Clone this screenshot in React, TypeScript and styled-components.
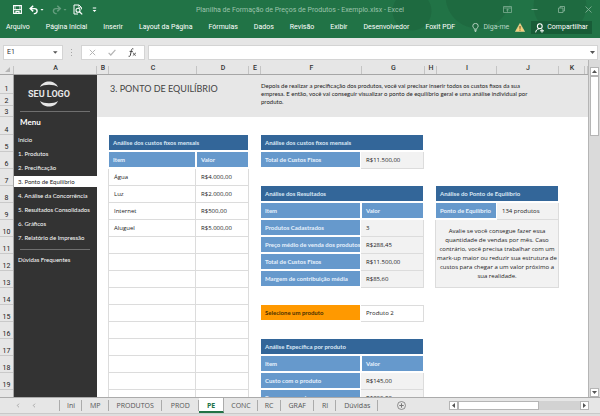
import React from "react";
import styled, { createGlobalStyle, css } from "styled-components";

const GlobalStyle = createGlobalStyle`
  *, *::before, *::after { box-sizing: border-box; }
  html, body { margin: 0; padding: 0; }
  body { background: #e6e6e6; overflow: hidden; }
  button, input, select { font: inherit; color: inherit; margin: 0; padding: 0; border: 0; background: none; }
`;

const uiFont = css`font-family: Roboto, "Open Sans", sans-serif;`;
const cellFont = css`font-family: Lato, "Open Sans", sans-serif;`;
const valueFont = css`font-family: "Open Sans", Lato, sans-serif;`;

const Shell = styled.div`
  ${uiFont}
  display: flex;
  flex-direction: column;
  height: 100vh;
  font-size: 7px;
  line-height: 9px;
  color: #333;
  background: #e6e6e6;
`;

/* ---------- title bar and ribbon ---------- */

const Top = styled.header`
  flex: none;
  background:
    radial-gradient(circle at 412px 11px, #1e6a40 0 19px, transparent 20px),
    radial-gradient(circle at 478px -4px, #1e6a40 0 32px, transparent 33px),
    radial-gradient(circle at 560px 6px, #1e6a40 0 26px, transparent 27px),
    #217346;
  color: #fff;
`;

const TitleBar = styled.div`
  display: grid;
  grid-template-columns: 1fr auto 1fr;
  align-items: center;
  height: 19px;
`;

const QuickAccess = styled.div`
  display: flex;
  align-items: center;
  gap: 4px;
  padding-left: 12px;
`;

const IconButton = styled.button<{ $w?: number; $dim?: boolean }>`
  display: flex;
  align-items: center;
  justify-content: center;
  flex: none;
  width: ${(p) => p.$w ?? 11}px;
  height: 12px;
  opacity: ${(p) => (p.$dim ? 0.3 : 1)};
`;

const DocTitle = styled.h1`
  margin: 0;
  padding-top: 2px;
  font-size: 7px;
  font-weight: 400;
  color: #9cc3ac;
  white-space: nowrap;
`;

const WindowButtons = styled.div`
  display: flex;
  justify-content: flex-end;
  gap: 16px;
  padding-right: 6px;
  color: #7fae93;
`;

const Ribbon = styled.nav`
  display: flex;
  align-items: center;
  gap: 16px;
  height: 19px;
  padding: 0 8px 2px 6px;
  white-space: nowrap;
`;

const RibbonTab = styled.button`
  flex: none;
  white-space: nowrap;
`;

const RibbonEnd = styled.div`
  display: flex;
  align-items: center;
  gap: 6px;
  margin-left: auto;
`;

const TellMe = styled.button`
  display: flex;
  align-items: center;
  gap: 4px;
  color: #b9d6c5;
`;

const Share = styled.button`
  display: flex;
  align-items: center;
  gap: 3px;
  height: 13px;
  padding: 0 4px;
  background: #185c37;
`;

/* ---------- formula bar ---------- */

const FormulaBar = styled.div`
  display: flex;
  flex: none;
  height: 22px;
  padding: 7px 2px 0 3px;
`;

const NameBox = styled.label`
  display: flex;
  align-items: center;
  width: 60px;
  height: 15px;
  padding: 0 4px 0 3px;
  border: 1px solid #d4d4d4;
  background: #fff;
  input { width: 100%; min-width: 0; outline: 0; }
`;

const Grip = styled.span`
  display: flex;
  justify-content: center;
  width: 18px;
  height: 15px;
  color: #a6a6a6;
`;

const FormulaTools = styled.div`
  display: flex;
  align-items: center;
  gap: 10px;
  width: 64px;
  height: 15px;
  padding: 0 6px;
  border: 1px solid #d4d4d4;
  background: #fff;
`;

const FormulaInput = styled.label`
  display: flex;
  flex: 1;
  align-items: center;
  height: 15px;
  margin-left: 3px;
  padding: 0 2px;
  border: 1px solid #d4d4d4;
  background: #fff;
  input { flex: 1; min-width: 0; outline: 0; }
`;

/* ---------- sheet ---------- */

const SheetArea = styled.div`
  display: grid;
  grid-template-columns: minmax(0, 1fr) 11px;
  flex: 1;
  min-height: 0;
  border-bottom: 1px solid #ababab;
`;

const Sheet = styled.div`
  display: flex;
  flex-direction: column;
  min-height: 0;
  border-right: 1px solid #b5b5b5;
  overflow: hidden;
`;

const ColumnHeads = styled.div`
  display: grid;
  grid-template-columns: 14px 83px 12px 88px 52px 12px 101px 63px 12px 60px 62px 26px 1fr;
  flex: none;
  height: 15px;
  border-bottom: 1px solid #a6a6a6;
`;

const ColumnHead = styled.div`
  display: flex;
  align-items: flex-end;
  justify-content: center;
  padding-bottom: 1px;
  background: linear-gradient(#c4c4c4, #c4c4c4) right bottom / 1px 8px no-repeat;
  font-weight: 500;
`;

const Body = styled.div`
  display: flex;
  flex: 1;
  min-height: 0;
  overflow: hidden;
`;

const RowHeads = styled.div`
  flex: none;
  width: 14px;
  border-right: 1px solid #a6a6a6;
`;

const RowHead = styled.div<{ $h: number }>`
  display: flex;
  align-items: flex-end;
  justify-content: center;
  height: ${(p) => p.$h}px;
  border-bottom: 1px solid #c9c9c9;
  line-height: 8px;
  color: #222;
`;

const Sidebar = styled.aside`
  ${cellFont}
  flex: none;
  width: 83px;
  padding-top: 6px;
  background: #333;
  color: #fff;
  font-size: 6px;
`;

const Logo = styled.div`
  ${uiFont}
  display: flex;
  flex-direction: column;
  align-items: center;
  padding-right: 13px;
  font-size: 9px;
  font-weight: 700;
  line-height: 14px;
  color: #e6e6e6;
  svg { display: block; }
`;

const Rule = styled.hr`
  height: 1px;
  margin: 4px 7px 4px 6px;
  border: 0;
  background: #6f6f6f;
`;

const MenuTitle = styled.h2`
  margin: 0 0 6px 6px;
  font-size: 8px;
  font-weight: 700;
  line-height: 12px;
`;

const Menu = styled.nav`
  display: flex;
  flex-direction: column;
  gap: 3px;
  padding-bottom: 2px;
`;

const MenuLink = styled.a<{ $active?: boolean }>`
  display: block;
  padding-left: 4px;
  font-size: 6px;
  line-height: 11px;
  white-space: nowrap;
  text-decoration: none;
  color: ${(p) => (p.$active ? "#222" : "#fff")};
  background: ${(p) => (p.$active ? "#fff" : "transparent")};
`;

const Content = styled.main`
  ${cellFont}
  flex: 1;
  min-width: 0;
  background: #fff;
  font-size: 6px;
`;

const Band = styled.section`
  display: grid;
  grid-template-columns: 151px 1fr;
  height: 42px;
  padding: 7px 0 0 13px;
  background: #e7e7e7;
`;

const PageTitle = styled.h2`
  margin: 0;
  font-size: 9px;
  font-weight: 400;
  line-height: 14px;
  color: #444;
`;

const Intro = styled.p`
  max-width: 276px;
  margin: 0;
  font-size: 6px;
  line-height: 8px;
  color: #222;
`;

const Columns = styled.div`
  display: grid;
  grid-template-columns: 141px 164px 124px;
  gap: 11px;
  align-items: start;
  padding: 18px 0 0 11px;
`;

const Stack = styled.div<{ $top?: number }>`
  display: flex;
  flex-direction: column;
  gap: 17px;
  padding-top: ${(p) => p.$top ?? 0}px;
`;

const Table = styled.table`
  width: 100%;
  table-layout: fixed;
  border-collapse: separate;
  border-spacing: 0;
`;

const Caption = styled.caption`
  height: 17px;
  padding: 3px 4px 0;
  border: solid #fff;
  border-width: 0 1px 2px;
  background: #336699;
  background-clip: padding-box;
  color: #dbe8f5;
  font-weight: 700;
  text-align: left;
`;

const HeadCell = styled.th<{ $gap?: boolean; $tone?: string; $ink?: string; $w?: number }>`
  width: ${(p) => (p.$w ? `${p.$w}px` : "auto")};
  height: 17px;
  padding: 0 0 0 4px;
  border: solid #fff;
  border-width: 0 1px 2px;
  background: ${(p) => p.$tone ?? "#6699cc"};
  background-clip: padding-box;
  color: ${(p) => p.$ink ?? "#e6f1fc"};
  font-weight: 700;
  text-align: left;
  white-space: nowrap;
  overflow: hidden;
`;

const Cell = styled.td<{ $fill?: string; $left?: boolean }>`
  ${valueFont}
  height: 17px;
  padding: 0 0 0 5px;
  border-right: 1px solid #dcdcdc;
  border-bottom: 1px solid #dcdcdc;
  border-left: ${(p) => (p.$left ? "1px solid #dcdcdc" : "0")};
  background: ${(p) => p.$fill ?? "#fff"};
  color: #222;
  white-space: nowrap;
`;

const PickCell = styled(Cell)`
  border-top: 1px solid #dcdcdc;
  select { width: 100%; appearance: none; outline: 0; }
`;

const Note = styled.p`
  ${valueFont}
  height: 68px;
  margin: 0;
  padding: 7px 0 0;
  border: 1px solid #dcdcdc;
  border-top: 0;
  background: #f2f2f2;
  line-height: 9px;
  text-align: center;
  color: #222;
`;

/* ---------- scroll bars and tabs ---------- */

const VScroll = styled.div`
  display: flex;
  flex-direction: column;
  justify-content: space-between;
  padding: 7px 1px 0;
  background: #dadada;
`;

const ScrollButton = styled.button`
  display: flex;
  align-items: center;
  justify-content: center;
  flex: none;
  width: 9px;
  height: 9px;
  border: 1px solid #b5b5b5;
  background: #fff;
`;

const VThumb = styled.div`
  height: 60px;
  border: 1px solid #b5b5b5;
  background: #fff;
`;

const TabBar = styled.nav`
  ${valueFont}
  display: flex;
  flex: none;
  height: 15px;
  color: #555;
`;

const TabNav = styled.div`
  display: flex;
  align-items: center;
  gap: 5px;
  width: 60px;
  padding-left: 12px;
  background: linear-gradient(#ababab, #ababab) right center / 1px 11px no-repeat;
`;

const SheetTab = styled.button<{ $active?: boolean; $pad?: number }>`
  flex: none;
  height: 15px;
  padding: 0 ${(p) => p.$pad ?? 7}px;
  background: linear-gradient(#ababab, #ababab) right center / 1px 11px no-repeat;
  ${(p) =>
    p.$active &&
    css`
      background: #fff;
      border-right: 1px solid #ababab;
      border-bottom: 2px solid #217346;
      padding-top: 1px;
      color: #217346;
      font-weight: 700;
    `}
`;

const AddSheet = styled.button`
  display: flex;
  align-items: center;
  margin-left: 19px;
`;

const HScroll = styled.div`
  display: flex;
  align-items: center;
  width: 151px;
  margin-left: auto;
  padding-right: 11px;
`;

const HTrack = styled.div`
  flex: 1;
  height: 9px;
  background: #d2d2d2;
`;

const HThumb = styled.div`
  width: 66%;
  height: 9px;
  border: 1px solid #b5b5b5;
  background: #fff;
`;

const Status = styled.footer`
  flex: none;
  height: 3px;
  border-top: 1px solid #c9c9c9;
  background: #dedede;
`;

/* ---------- icons ---------- */

const Arrow = ({ dir }: { dir: "up" | "down" | "left" | "right" }) => {
  const d = { up: "M0 4L2.5 1L5 4Z", down: "M0 1L2.5 4L5 1Z", left: "M4 0L1 2.5L4 5Z", right: "M1 0L4 2.5L1 5Z" }[dir];
  return <svg width="5" height="5" viewBox="0 0 5 5"><path d={d} fill="#555" /></svg>;
};

const GripIcon = () => (
  <svg width="2" height="15" viewBox="0 0 2 15" fill="currentColor"><path d="M0 4H1V5H0ZM0 7H1V8H0ZM0 10H1V11H0Z" /></svg>
);

const ChevronIcon = () => (
  <svg width="4" height="5" viewBox="0 0 4 5" fill="none" stroke="#aaa"><path d="M3 .7L1.2 2.5L3 4.3" /></svg>
);

const SaveIcon = () => (
  <svg width="9" height="9" viewBox="0 0 9 9" fill="none" stroke="#fff">
    <path d="M.6 .6H8.4V8.4H.6Z" strokeWidth="1.1" />
    <path d="M1 4.6H8" strokeWidth="1" />
    <path d="M2.2 .6V4.4M6.8 .6V4.4" strokeWidth=".6" />
    <path d="M3 8V6.4H6V8" strokeWidth="1.2" />
  </svg>
);

const UndoIcon = ({ flip }: { flip?: boolean }) => (
  <svg width="15" height="10" viewBox="0 0 15 10" fill="none" stroke="#fff">
    <g transform={flip ? "translate(9.5 0) scale(-1 1)" : undefined}>
      <path d="M1.4 3.6H5.6A2.4 2.4 0 0 1 5.6 8.6H4.8" strokeWidth="1.4" />
      <path d="M4.2 .8L1.2 3.6L4.2 6.4" strokeWidth="1.5" />
    </g>
    <path d="M11.5 4H14.5L13 5.8Z" fill="#fff" stroke="none" />
  </svg>
);

const PreviewIcon = () => (
  <svg width="10" height="11" viewBox="0 0 10 11" fill="none" stroke="#fff">
    <path d="M1 10V1H6L8.4 3.4V5.4M1 10H5" strokeWidth="1" />
    <path d="M5.8 1V3.6H8.4" strokeWidth=".7" />
    <circle cx="5" cy="6.2" r="2" strokeWidth="1.1" />
    <path d="M6.5 7.7L9.2 10.4" strokeWidth="1.3" />
  </svg>
);

const MoreIcon = () => (
  <svg width="5" height="6" viewBox="0 0 5 6" fill="#fff"><path d="M.8 .6H4.2V1.5H.8ZM.6 3H4.4L2.5 5Z" /></svg>
);

const RibbonOptionsIcon = () => (
  <svg width="9" height="7" viewBox="0 0 9 7" fill="none" stroke="currentColor" strokeWidth=".8">
    <path d="M.5 .5H8.5V6.5H.5ZM.5 2H8.5M4.5 5.8V3.2M3.2 4.3L4.5 3L5.8 4.3" />
  </svg>
);
const MinIcon = () => <svg width="7" height="7" viewBox="0 0 7 7" stroke="currentColor"><path d="M.5 3.5H6.5" /></svg>;
const RestoreIcon = () => (
  <svg width="7" height="7" viewBox="0 0 7 7" fill="none" stroke="currentColor" strokeWidth=".9"><path d="M.5 2H5V6.5H.5ZM2 2V.5H6.5V5H5" /></svg>
);
const CloseIcon = () => (
  <svg width="7" height="7" viewBox="0 0 7 7" stroke="currentColor" strokeWidth=".9"><path d="M.5 .5L6.5 6.5M6.5 .5L.5 6.5" /></svg>
);

const BulbIcon = () => (
  <svg width="7" height="9" viewBox="0 0 7 9" fill="none" stroke="#d5e7dc" strokeWidth=".8">
    <path d="M2.3 6.2C2.3 5 .8 4.6 .8 2.9A2.7 2.5 0 0 1 6.2 2.9C6.2 4.6 4.7 5 4.7 6.2ZM2.4 7.4H4.6M2.8 8.5H4.2" />
  </svg>
);
const WarnIcon = () => (
  <svg width="10" height="9" viewBox="0 0 10 9">
    <path d="M5 .4L9.6 8.6H.4Z" fill="#f6cf7a" stroke="#f9e0a8" strokeWidth=".5" />
    <path d="M5 3V5.8M5 6.6V7.6" stroke="#5a4a1c" strokeWidth="1" />
  </svg>
);
const PersonIcon = () => (
  <svg width="9" height="10" viewBox="0 0 9 10" fill="none" stroke="#fff">
    <circle cx="4.8" cy="3.2" r="2.4" strokeWidth="1.1" />
    <path d="M.7 9.4C.8 7.4 2.2 6 4 5.8M5 7.8H9M7 5.9V9.7" strokeWidth="1" />
  </svg>
);

const CancelIcon = () => (
  <svg width="7" height="7" viewBox="0 0 7 7" stroke="#b5b5b5"><path d="M.8 .8L6.2 6.2M6.2 .8L.8 6.2" /></svg>
);
const CheckIcon = () => (
  <svg width="8" height="7" viewBox="0 0 8 7" fill="none" stroke="#b5b5b5" strokeWidth="1.2"><path d="M.6 3.8L2.8 6L7.4 .8" /></svg>
);
const FunctionIcon = () => (
  <svg width="9" height="9" viewBox="0 0 9 9" fill="none" stroke="#444">
    <path d="M5.4 .9C4.2 .3 3.7 1 3.4 2.4L2.4 7C2.1 8.3 1.5 8.7 .6 8.3M1.6 3.4H4.8" strokeWidth="1" />
    <path d="M4.8 4.8C6 4.4 6 7.8 7.8 7.4M8 4.8L4.8 7.6" strokeWidth=".8" />
  </svg>
);
const PlusIcon = () => (
  <svg width="9" height="9" viewBox="0 0 9 9" fill="none" stroke="#777" strokeWidth=".8">
    <circle cx="4.5" cy="4.5" r="4" /><path d="M4.5 2.3V6.7M2.3 4.5H6.7" strokeWidth="1" />
  </svg>
);
const CornerIcon = () => <svg width="7" height="7" viewBox="0 0 7 7"><path d="M6 1V6H1Z" fill="#b5b5b5" /></svg>;

const LogoArc = ({ bottom }: { bottom?: boolean }) => (
  <svg width="18" height="6" viewBox="0 0 18 6">
    <path
      d={bottom ? "M0 0C4 3 14 3 18 0C15 7.4 3 7.4 0 0Z" : "M0 6C4 3 14 3 18 6C15 -1.4 3 -1.4 0 6Z"}
      fill="#e6e6e6"
    />
  </svg>
);

/* ---------- data ---------- */

const ribbonTabs = ["Arquivo", "Página Inicial", "Inserir", "Layout da Página", "Fórmulas", "Dados", "Revisão", "Exibir", "Desenvolvedor", "Foxit PDF"];
const columnNames = ["", "A", "B", "C", "D", "E", "F", "G", "H", "I", "J", "K", ""];
const rowHeights = [19, 12, 11, 18, ...Array(15).fill(17)];
const menu = ["Início", "1. Produtos", "2. Precificação", "3. Ponto de Equilíbrio", "4. Análise da Concorrência", "5. Resultados Consolidados", "6. Gráficos", "7. Relatório de Impressão"];
const costs = [["Água", "R$4.000,00"], ["Luz", "R$2.000,00"], ["Internet", "R$500,00"], ["Aluguel", "R$5.000,00"], ...Array(11).fill(["", ""])];
const results = [["Produtos Cadastrados", "3"], ["Preço médio de venda dos produtos", "R$288,45"], ["Total de Custos Fixos", "R$11.500,00"], ["Margem de contribuição média", "R$85,60"]];
const specific = [["Custo com o produto", "R$145,00"], ["Preço com markup", "R$322,90"]];
const sheetTabs: [string, number][] = [["Ini", 7], ["MP", 8], ["PRODUTOS", 8], ["PROD", 9], ["PE", 8], ["CONC", 7], ["RC", 7], ["GRAF", 8], ["RI", 8], ["Dúvidas", 8]];

const ResultTable = ({ title, rows }: { title: string; rows: string[][] }) => (
  <Table>
    <Caption>{title}</Caption>
    <thead>
      <tr><HeadCell $w={101} scope="col">Item</HeadCell><HeadCell scope="col">Valor</HeadCell></tr>
    </thead>
    <tbody>
      {rows.map(([name, value]) => (
        <tr key={name}><HeadCell scope="row">{name}</HeadCell><Cell $fill="#f2f2f2">{value}</Cell></tr>
      ))}
    </tbody>
  </Table>
);

export default function App() {
  return (
    <Shell>
      <GlobalStyle />
      <Top>
        <TitleBar>
          <QuickAccess>
            <IconButton aria-label="Salvar"><SaveIcon /></IconButton>
            <IconButton $w={19} aria-label="Desfazer"><UndoIcon /></IconButton>
            <IconButton $w={18} $dim aria-label="Refazer"><UndoIcon flip /></IconButton>
            <IconButton $w={12} aria-label="Visualizar impressão"><PreviewIcon /></IconButton>
            <IconButton $w={12} aria-label="Personalizar"><MoreIcon /></IconButton>
          </QuickAccess>
          <DocTitle>Planilha de Formação de Preços de Produtos - Exemplo.xlsx - Excel</DocTitle>
          <WindowButtons>
            <IconButton aria-label="Opções da faixa"><RibbonOptionsIcon /></IconButton>
            <IconButton aria-label="Minimizar"><MinIcon /></IconButton>
            <IconButton aria-label="Restaurar"><RestoreIcon /></IconButton>
            <IconButton aria-label="Fechar"><CloseIcon /></IconButton>
          </WindowButtons>
        </TitleBar>
        <Ribbon>
          {ribbonTabs.map((t) => <RibbonTab key={t}>{t}</RibbonTab>)}
          <RibbonEnd>
            <TellMe><BulbIcon />Diga-me</TellMe>
            <WarnIcon />
            <Share><PersonIcon />Compartilhar</Share>
          </RibbonEnd>
        </Ribbon>
      </Top>

      <FormulaBar>
        <NameBox><input aria-label="Caixa de nome" defaultValue="E1" /><Arrow dir="down" /></NameBox>
        <Grip><GripIcon /></Grip>
        <FormulaTools>
          <IconButton $w={9} aria-label="Cancelar"><CancelIcon /></IconButton>
          <IconButton $w={10} aria-label="Inserir"><CheckIcon /></IconButton>
          <IconButton $w={10} aria-label="Inserir função"><FunctionIcon /></IconButton>
        </FormulaTools>
        <FormulaInput><input aria-label="Barra de fórmulas" /><Arrow dir="down" /></FormulaInput>
      </FormulaBar>

      <SheetArea>
        <Sheet>
          <ColumnHeads>
            {columnNames.map((c, i) => (
              <ColumnHead key={i}>{i === 0 ? <CornerIcon /> : c}</ColumnHead>
            ))}
          </ColumnHeads>
          <Body>
            <RowHeads>{rowHeights.map((h, i) => <RowHead key={i} $h={h}>{i + 1}</RowHead>)}</RowHeads>
            <Sidebar>
              <Logo><LogoArc />SEU LOGO<LogoArc bottom /></Logo>
              <Rule />
              <MenuTitle>Menu</MenuTitle>
              <Menu>
                {menu.map((m, i) => <MenuLink key={m} href="#" $active={i === 3}>{m}</MenuLink>)}
              </Menu>
              <Rule />
              <Menu>
                <MenuLink href="#">Dúvidas Frequentes</MenuLink>
              </Menu>
            </Sidebar>
            <Content>
              <Band>
                <PageTitle>3. PONTO DE EQUILÍBRIO</PageTitle>
                <Intro>
                  Depois de realizar a precificação dos produtos, você vai precisar inserir todos os custos fixos da sua
                  empresa. E então, você vai conseguir visualizar o ponto de equilíbrio geral e uma análise individual por
                  produto.
                </Intro>
              </Band>
              <Columns>
                <Table>
                  <Caption>Análise dos custos fixos mensais</Caption>
                  <thead>
                    <tr><HeadCell $w={88} scope="col">Item</HeadCell><HeadCell scope="col">Valor</HeadCell></tr>
                  </thead>
                  <tbody>
                    {costs.map(([name, value], i) => (
                      <tr key={i}><Cell $left>{name}</Cell><Cell>{value}</Cell></tr>
                    ))}
                  </tbody>
                </Table>
                <Stack>
                  <Table>
                    <Caption>Análise dos custos fixos mensais</Caption>
                    <tbody>
                      <tr><HeadCell $w={101} scope="row">Total de Custos Fixos</HeadCell><Cell $fill="#f2f2f2">R$11.500,00</Cell></tr>
                    </tbody>
                  </Table>
                  <ResultTable title="Análise dos Resultados" rows={results} />
                  <Table>
                    <tbody>
                      <tr>
                        <HeadCell $w={101} $tone="#ff9900" $ink="#4a3000" scope="row">Selecione um produto</HeadCell>
                        <PickCell>
                          <select aria-label="Selecione um produto" defaultValue="Produto 2">
                            <option>Produto 1</option><option>Produto 2</option><option>Produto 3</option>
                          </select>
                        </PickCell>
                      </tr>
                    </tbody>
                  </Table>
                  <ResultTable title="Análise Específica por produto" rows={specific} />
                </Stack>
                <Stack $top={51}>
                  <div>
                    <Table>
                      <Caption>Análise do Ponto de Equilíbrio</Caption>
                      <tbody>
                        <tr><HeadCell $w={62} scope="row">Ponto de Equilíbrio</HeadCell><Cell $fill="#f2f2f2">134 produtos</Cell></tr>
                      </tbody>
                    </Table>
                    <Note>
                      Avalie se você consegue fazer essa quantidade de vendas por mês. Caso contrário, você precisa trabalhar
                      com um mark-up maior ou reduzir sua estrutura de custos para chegar a um valor próximo a sua realidade.
                    </Note>
                  </div>
                </Stack>
              </Columns>
            </Content>
          </Body>
        </Sheet>
        <VScroll>
          <div>
            <ScrollButton aria-label="Rolar para cima"><Arrow dir="up" /></ScrollButton>
            <VThumb />
          </div>
          <ScrollButton aria-label="Rolar para baixo"><Arrow dir="down" /></ScrollButton>
        </VScroll>
      </SheetArea>

      <TabBar>
        <TabNav>
          <IconButton aria-label="Primeira planilha"><ChevronIcon /></IconButton>
          <IconButton aria-label="Planilha anterior"><ChevronIcon /></IconButton>
        </TabNav>
        {sheetTabs.map(([name, pad]) => <SheetTab key={name} $pad={pad} $active={name === "PE"}>{name}</SheetTab>)}
        <AddSheet aria-label="Nova planilha"><PlusIcon /></AddSheet>
        <HScroll>
          <ScrollButton aria-label="Rolar para a esquerda"><Arrow dir="left" /></ScrollButton>
          <HTrack><HThumb /></HTrack>
          <ScrollButton aria-label="Rolar para a direita"><Arrow dir="right" /></ScrollButton>
        </HScroll>
      </TabBar>
      <Status />
    </Shell>
  );
}
